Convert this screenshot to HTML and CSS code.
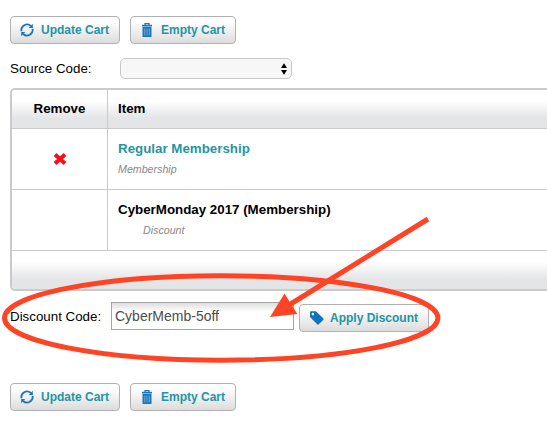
FILE: index.html
```html
<!DOCTYPE html>
<html lang="en">
<head>
    <meta charset="UTF-8">
    <meta name="viewport" content="width=device-width, initial-scale=1.0">
    <title>Shopping Cart</title>
    <link rel="stylesheet" href="styles.css">
</head>
<body>
    <!-- Shared icons -->
    <svg class="icon-defs" width="0" height="0">
        <symbol id="icon-refresh" viewBox="0 0 14 14">
            <path d="M1.5 8.2A5.6 5.6 0 0 1 10.8 3M12.5 5.8A5.6 5.6 0 0 1 3.2 11" fill="none" stroke="#1a75bc" stroke-width="1.8"/>
            <path d="M12.8 0.8V4.9H8.7ZM1.2 13.2V9.1H5.3Z" fill="#1a75bc"/>
        </symbol>
        <symbol id="icon-trash" viewBox="0 0 12 14">
            <path d="M4 2V0.7H8V2" fill="none" stroke="#1a75bc" stroke-width="1.2"/>
            <path d="M1 1.8H11V3.5H1Z" fill="#1a75bc"/>
            <path d="M1.5 4H10.5V14H1.5Z" fill="#1a75bc"/>
            <path d="M3.7 5.5V12.5M6 5.5V12.5M8.3 5.5V12.5" stroke="#7aafd9" stroke-width="0.9"/>
        </symbol>
        <symbol id="icon-tag" viewBox="0 0 14 14">
            <path d="M0.8 0.3H5.8L13.2 7.3Q14 8.1 13.2 8.9L8.8 13.3Q8 14 7.2 13.3L0 6V1.1Q0 0.3 0.8 0.3ZM2.9 1.8A1.3 1.3 0 1 0 2.9 4.4A1.3 1.3 0 1 0 2.9 1.8Z" fill="#0f72ba" fill-rule="evenodd"/>
        </symbol>
    </svg>

    <div class="cart-page">
        <div class="cart-actions">
            <button type="button" class="button update"><svg class="icon"><use href="#icon-refresh"/></svg>Update Cart</button>
            <button type="button" class="button empty"><svg class="icon trash"><use href="#icon-trash"/></svg>Empty Cart</button>
        </div>

        <div class="source-row">
            <label for="source">Source Code:</label>
            <div class="select-wrap">
                <select id="source"><option></option></select>
                <svg class="select-arrows" width="6" height="12" viewBox="0 0 6 12">
                    <path d="M3 0.3L6 5H0ZM3 11.7L6 7H0Z" fill="#000"/>
                </svg>
            </div>
        </div>

        <div class="cart-table">
            <div class="row head">
                <div class="cell remove">Remove</div>
                <div class="cell">Item</div>
            </div>
            <div class="row">
                <div class="cell remove">
                    <svg width="14" height="12" viewBox="0 0 14 12">
                        <path d="M2 1.6L12 10.4M12 1.6L2 10.4" stroke="#fb0d1b" stroke-width="4"/>
                    </svg>
                </div>
                <div class="cell">
                    <a href="#" class="item-name">Regular Membership</a>
                    <div class="item-type">Membership</div>
                </div>
            </div>
            <div class="row">
                <div class="cell remove"></div>
                <div class="cell">
                    <div class="item-name">CyberMonday 2017 (Membership)</div>
                    <div class="item-type discount">Discount</div>
                </div>
            </div>
            <div class="row foot"></div>
        </div>

        <div class="discount-row">
            <label for="discount">Discount Code:</label>
            <input type="text" id="discount" value="CyberMemb-5off">
            <button type="button" class="button apply"><svg class="icon"><use href="#icon-tag"/></svg>Apply Discount</button>
        </div>

        <div class="cart-actions">
            <button type="button" class="button update"><svg class="icon"><use href="#icon-refresh"/></svg>Update Cart</button>
            <button type="button" class="button empty"><svg class="icon trash"><use href="#icon-trash"/></svg>Empty Cart</button>
        </div>
    </div>

    <!-- Callout over the discount code -->
    <svg class="callout" width="547" height="422" viewBox="0 0 547 422">
        <ellipse cx="221.2" cy="318" rx="216.7" ry="42.2" fill="none" stroke="#ff4426" stroke-width="5"/>
        <path d="M428 219L289 305" stroke="#ff4426" stroke-width="5"/>
        <path d="M270 317L284.5 293.5L297.3 314Z" fill="#ff4426"/>
    </svg>
</body>
</html>
```

FILE: styles.css
```css
body {
    font-family: "Liberation Sans", Arial, sans-serif;
    font-size: 13.33px;
    color: #000;
    margin: 0;
    background-color: #fff;
}

.icon-defs {
    display: block;
}

.cart-page {
    padding: 16px 0 0 10px;
}

.cart-actions {
    display: flex;
    gap: 10px;
}

.button {
    display: flex;
    align-items: center;
    box-sizing: border-box;
    height: 28px;
    padding: 0 0 1px 9px;
    border: 1px solid #b1b1b1;
    border-radius: 4px;
    background: linear-gradient(#fff 15%, #dcdcdc);
    color: #1f96a4;
    font-family: inherit;
    font-size: 12px;
    font-weight: bold;
    white-space: nowrap;
    cursor: pointer;
}

.button:hover {
    border-color: #888;
}

.button.update {
    width: 110px;
}

.button.empty {
    width: 106px;
    padding-left: 10px;
}

.button.apply {
    width: 130px;
    margin: 2px 0 0 5px;
    padding-left: 10px;
}

.icon {
    width: 14px;
    height: 14px;
    margin-right: 7px;
}

.icon.trash {
    width: 12px;
    margin-right: 8px;
}

.button.apply .icon {
    margin-right: 6px;
}

.source-row {
    display: flex;
    align-items: center;
    height: 21px;
    margin-top: 14px;
}

.source-row label {
    width: 110px;
}

.select-wrap {
    position: relative;
    height: 21px;
}

.select-wrap select {
    appearance: none;
    display: block;
    width: 172px;
    height: 21px;
    border: 1px solid #c8c8c8;
    border-radius: 5px;
    background-color: #f7f7f7;
}

.select-arrows {
    position: absolute;
    right: 5px;
    top: 5px;
}

.cart-table {
    margin-top: 9px;
    border: 2px solid #cacaca;
    border-right: none;
    border-radius: 5px 0 0 5px;
    overflow: hidden;
}

.row {
    display: flex;
    height: 60px;
    border-bottom: 1px solid #cacaca;
}

.cell {
    flex: 1;
    padding: 12px 10px 0;
}

.cell.remove {
    display: flex;
    flex: none;
    align-items: center;
    justify-content: center;
    box-sizing: border-box;
    width: 96px;
    padding: 0;
    border-right: 1px solid #cacaca;
}

.row.head,
.row.foot {
    height: 38px;
    background: linear-gradient(#fff 28%, #e4e5e7 74%);
    font-weight: bold;
}

.row.head .cell {
    padding-top: 11px;
}

.row.head .cell.remove {
    padding: 0 0 1px;
}

.row.foot {
    border-bottom: none;
}

.item-name {
    display: block;
    line-height: 15px;
    font-weight: bold;
    text-decoration: none;
}

a.item-name {
    color: #1f96a4;
}

.item-type {
    margin-top: 7px;
    color: #888;
    font-size: 10.67px;
    font-style: italic;
    line-height: 12px;
}

.item-type.discount {
    margin-left: 25px;
}

.discount-row {
    display: flex;
    margin-top: 11px;
}

.discount-row label {
    width: 101px;
    line-height: 29px;
}

.discount-row input {
    box-sizing: border-box;
    width: 183px;
    height: 28px;
    padding: 0 4px 1px 3px;
    border: 1px solid #a5a5a5;
    background: linear-gradient(#dedede, #fff 9px);
    color: #4c4c4c;
    font-family: inherit;
    font-size: 14px;
}

.discount-row + .cart-actions {
    margin-top: 51px;
}

/* red ellipse and arrow */
.callout {
    position: absolute;
    left: 0;
    top: 0;
    pointer-events: none;
}
```
